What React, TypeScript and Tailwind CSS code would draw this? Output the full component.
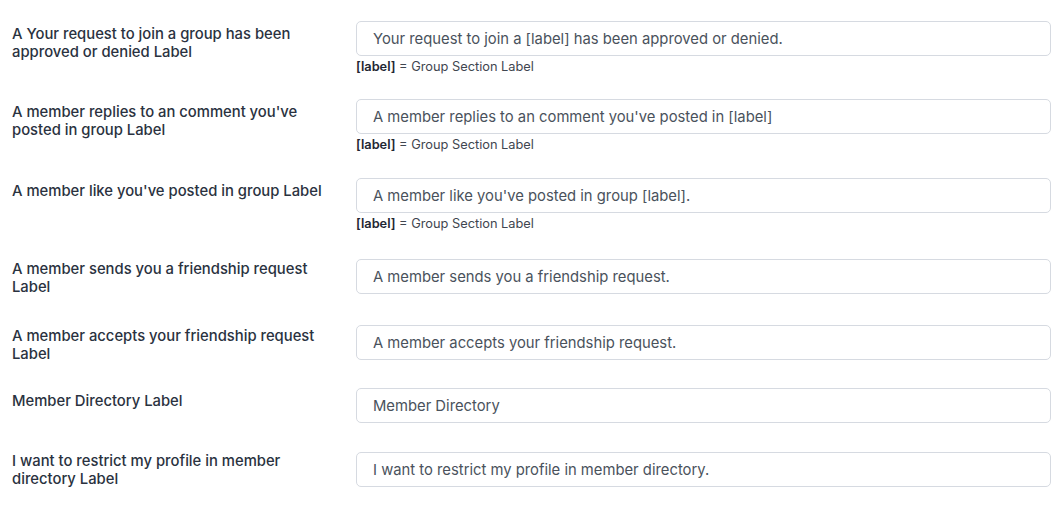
type Row = {
  lines: string[];
  value: string;
  helper?: boolean;
  rowClass: string;
  labelClass: string;
};

// measured from the settings screen: row heights + label nudges
const rows: Row[] = [
  {
    lines: ["A Your request to join a group has been", "approved or denied Label"],
    value: "Your request to join a [label] has been approved or denied.",
    helper: true,
    rowClass: "h-[78px]",
    labelClass: "pt-[6px]",
  },
  {
    lines: ["A member replies to an comment you've", "posted in group Label"],
    value: "A member replies to an comment you've posted in [label]",
    helper: true,
    rowClass: "h-[79px]",
    labelClass: "pt-[6px]",
  },
  {
    lines: ["A member like you've posted in group Label"],
    value: "A member like you've posted in group [label].",
    helper: true,
    rowClass: "h-[81px]",
    labelClass: "pt-[6px]",
  },
  {
    lines: ["A member sends you a friendship request", "Label"],
    value: "A member sends you a friendship request.",
    rowClass: "h-[66px]",
    labelClass: "pt-[3px]",
  },
  {
    lines: ["A member accepts your friendship request", "Label"],
    value: "A member accepts your friendship request.",
    rowClass: "h-[63px]",
    labelClass: "pt-[4px]",
  },
  {
    lines: ["Member Directory Label"],
    value: "Member Directory",
    rowClass: "h-[64px]",
    labelClass: "pt-[6px]",
  },
  {
    lines: ["I want to restrict my profile in member", "directory Label"],
    value: "I want to restrict my profile in member directory.",
    rowClass: "h-[59px]",
    labelClass: "pt-[2px]",
  },
];

function SettingRow({ row }: { row: Row }) {
  return (
    <div className={`flex items-start ${row.rowClass}`}>
      <div
        className={`w-[356px] shrink-0 pl-3 pr-4 text-[14.8px] leading-[18px] font-medium text-[#2a3240] ${row.labelClass}`}
      >
        {row.lines.map((l, i) => (
          <div key={i} className="whitespace-nowrap">
            {l}
          </div>
        ))}
      </div>
      <div className="flex-1 pt-[2px]">
        <input
          type="text"
          readOnly
          defaultValue={row.value}
          className="block w-full h-[35px] rounded-[5px] border border-[#d6dae1] bg-white px-4 text-[14.8px] text-[#4a525c] outline-none"
        />
        {row.helper && (
          <p className="mt-[1px] text-[12.8px] leading-[19px] text-[#3f4650]">
            <span className="font-semibold text-[#1f2733]">[label]</span> = Group Section Label
          </p>
        )}
      </div>
    </div>
  );
}

export default function App() {
  return (
    <div
      className="min-h-screen bg-white pt-[19px] pr-[10px]"
      style={{ fontFamily: 'Inter, "Open Sans", sans-serif' }}
    >
      {rows.map((row, i) => (
        <SettingRow key={i} row={row} />
      ))}
    </div>
  );
}
